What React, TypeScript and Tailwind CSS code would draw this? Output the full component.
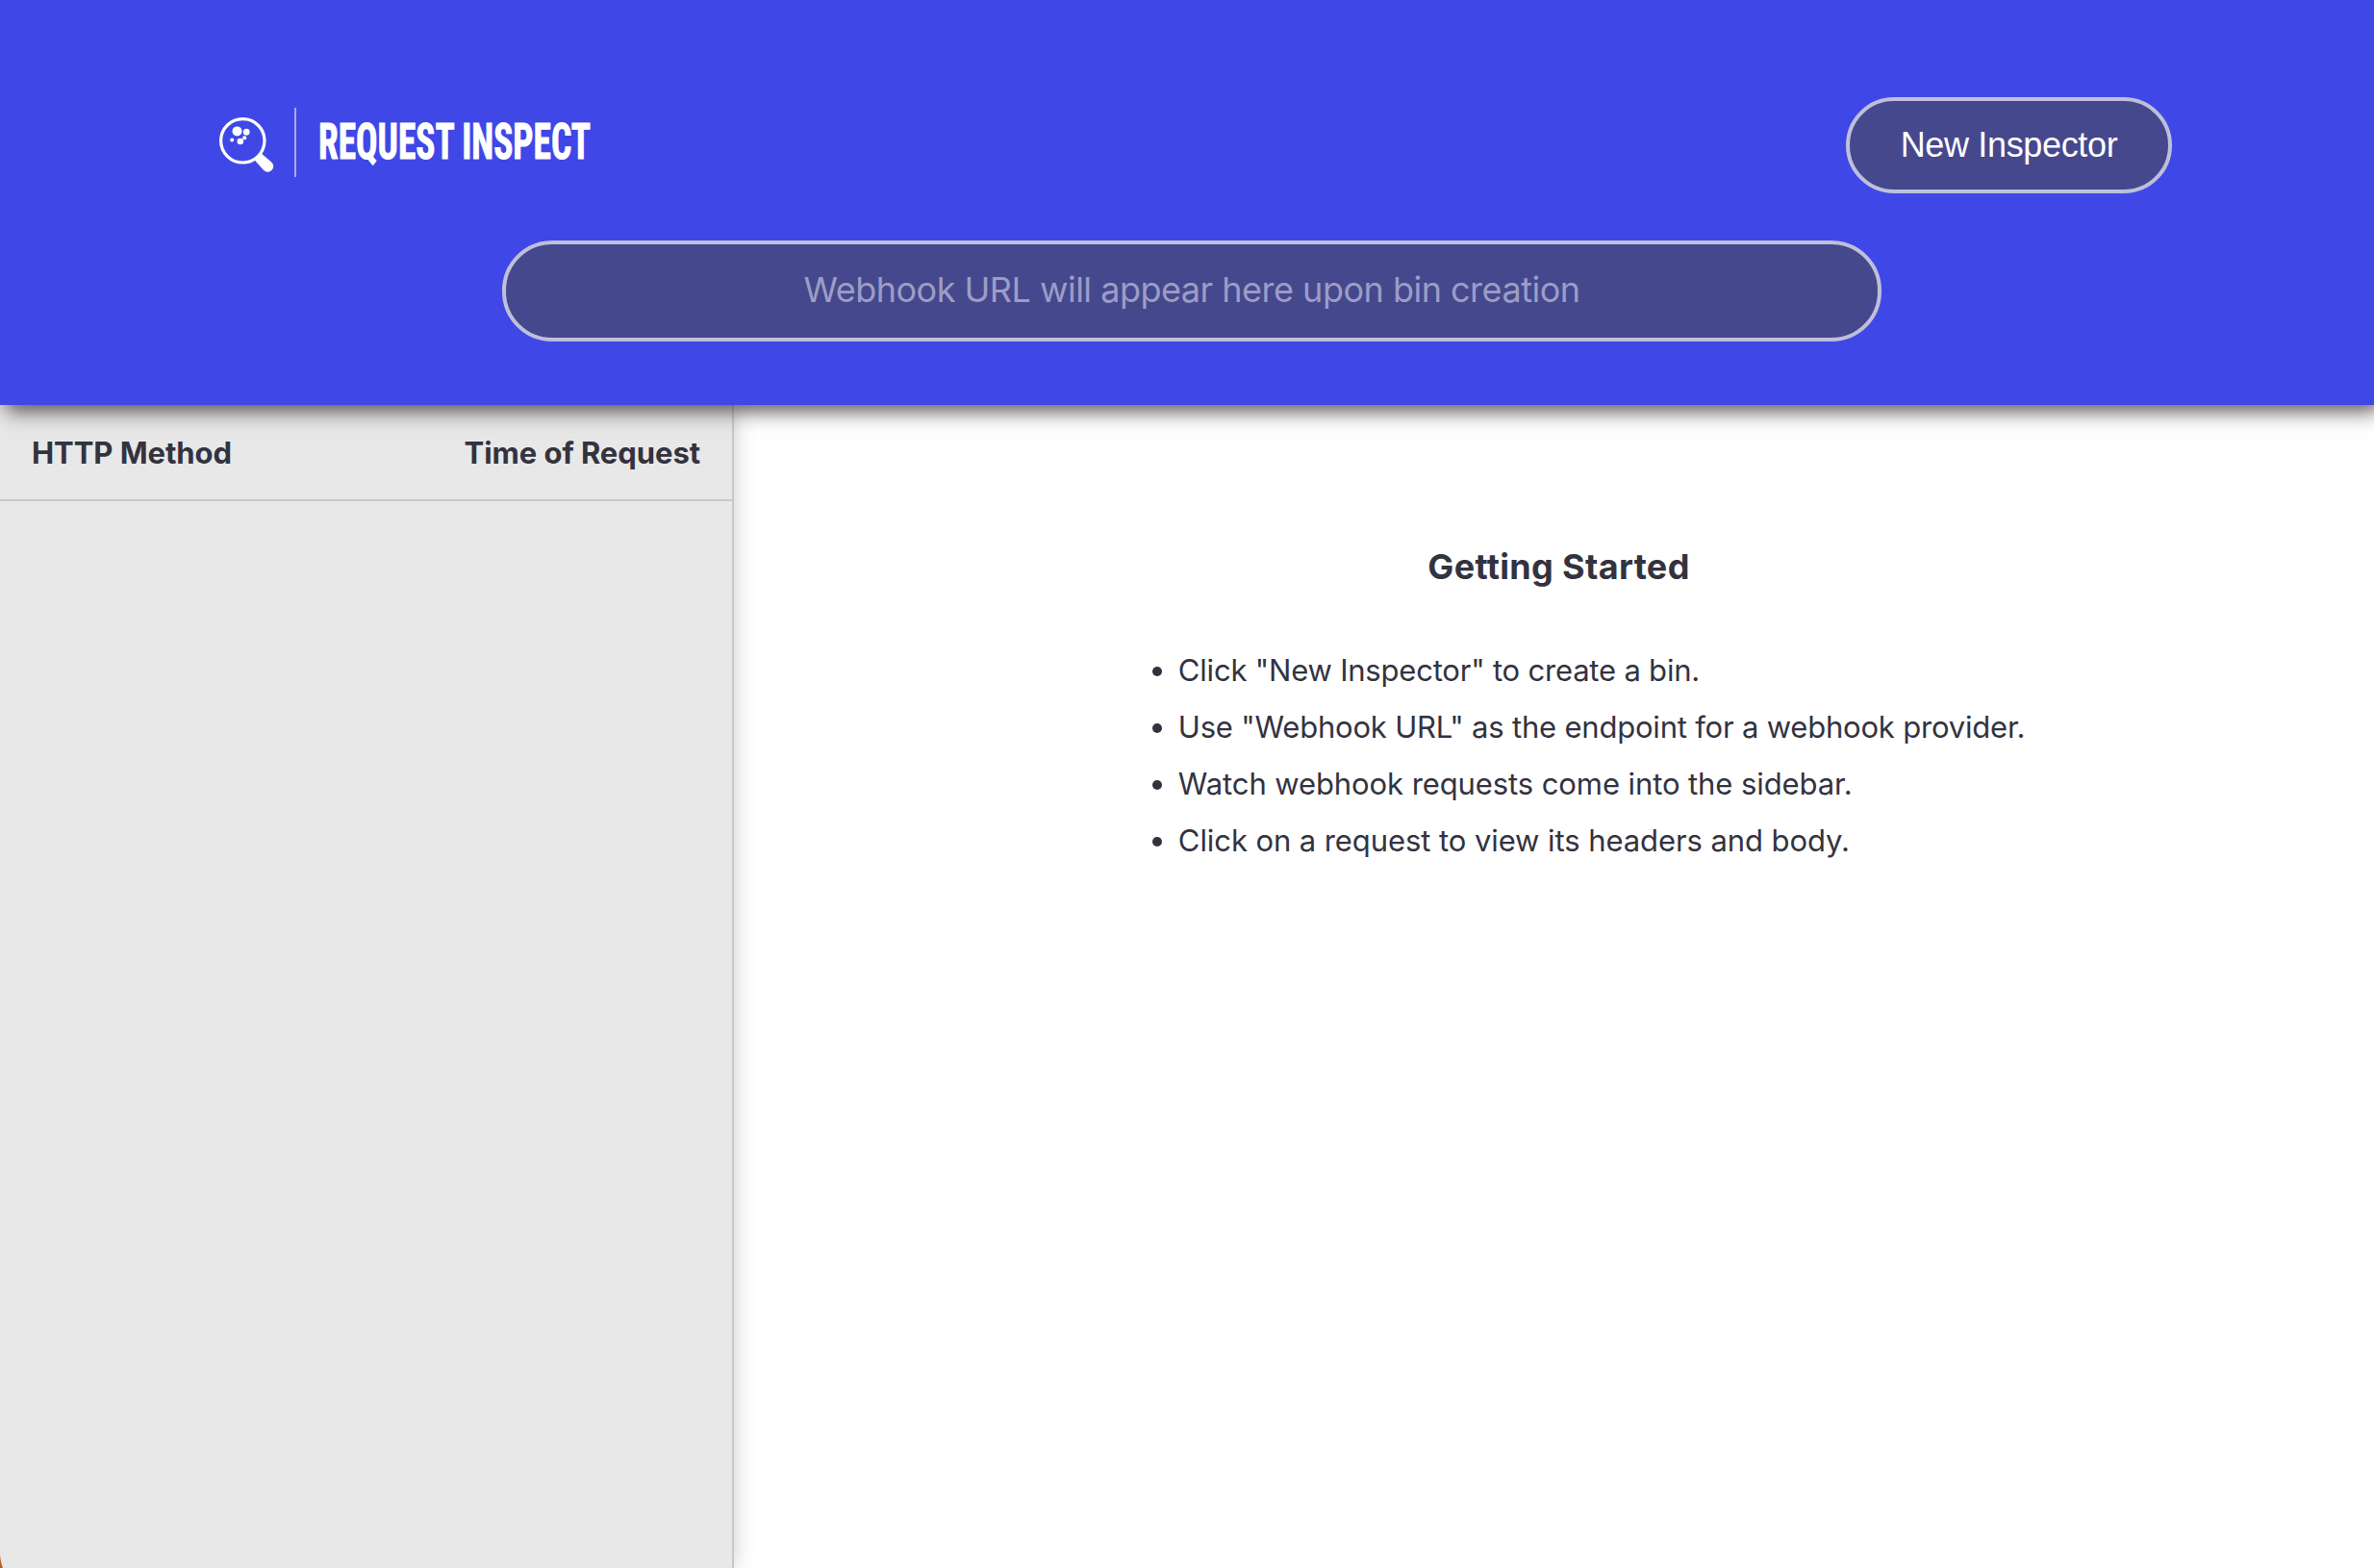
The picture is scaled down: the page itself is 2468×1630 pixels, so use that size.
const steps = [
  { text: 'Click "New Inspector" to create a bin.', spacing: 'tracking-[-0.2px]' },
  { text: 'Use "Webhook URL" as the endpoint for a webhook provider.', spacing: 'tracking-[-0.2px]' },
  { text: 'Watch webhook requests come into the sidebar.', spacing: 'tracking-[-0.09px]' },
  { text: 'Click on a request to view its headers and body.', spacing: 'tracking-[-0.08px]' },
];

function Logo() {
  return (
    <div className="flex items-center">
      <svg className="mt-[4px] h-[60px] w-[60px]" viewBox="0 0 60 60" fill="white">
        <circle cx="25.3" cy="26.3" r="22.7" fill="none" stroke="white" strokeWidth="3.2" />
        <circle cx="19.5" cy="16.4" r="5" />
        <circle cx="29.2" cy="17.2" r="3.4" />
        <circle cx="27.2" cy="23.3" r="2.1" />
        <circle cx="14.2" cy="25.4" r="2" />
        <circle cx="22.8" cy="27" r="3.3" />
        <path d="M43.5 38.5 L54.9 48.2 Q59.5 52.8 55.4 56.9 Q51 60.8 46.9 56.8 L37.5 46.2 Q41.8 43 43.5 38.5Z" />
      </svg>
      <div className="ml-[19px] h-[72px] w-[2px] bg-[#a5a8f2]" />
      <h1 className="ml-[23px] w-[300px] whitespace-nowrap">
        <svg className="block h-[72px] w-[300px] overflow-visible" viewBox="0 0 300 72" fill="white">
          <text x="0" y="53" textLength="283" lengthAdjust="spacingAndGlyphs" stroke="white" strokeWidth="0.9" className="font-['Roboto',sans-serif] text-[52.5px] font-bold [font-stretch:75%]">
            REQUEST INSPECT
          </text>
        </svg>
      </h1>
    </div>
  );
}

export default function App() {
  return (
    <div className="relative flex h-[1630px] w-[2468px] flex-col overflow-hidden bg-white font-['Inter',sans-serif] text-[#33333f]">
      <header className="relative z-10 flex h-[421px] shrink-0 flex-col items-center bg-[#3f48e7] pt-[101px] shadow-[6px_6px_20px_rgba(63,52,52,0.88)]">
        <div className="flex h-[100px] w-full justify-between pr-[210px] pl-[227px]">
          <div className="-mt-[6px] flex h-[106px] items-center">
            <Logo />
          </div>
          <button className="h-[100px] w-[339px] rounded-[50px] border-4 border-[#bfbfdb] bg-[#46488d] font-['Liberation_Sans',sans-serif] text-[36px] tracking-[-0.35px] text-white">
            New Inspector
          </button>
        </div>
        <div className="mt-[49px] ml-[10px] flex h-[105px] w-[1434px] items-center justify-center rounded-[52px] border-4 border-[#bfbfdb] bg-[#46488d] pb-[3px] text-[36px] tracking-[-0.5px] text-[#9c9dc6]">
          Webhook URL will appear here upon bin creation
        </div>
      </header>
      <div className="flex min-h-0 flex-1">
        <aside className="w-[763px] shrink-0 border-r-2 border-[#c8c8c8] bg-[#e8e8e8] shadow-[0_0_20px_rgba(63,52,52,0.26)]">
          <div className="flex h-[100px] items-center justify-between border-b-2 border-[#c8c8c8] px-[33px] pt-[2px] text-[31px] font-bold tracking-[-0.06px]">
            <span>HTTP Method</span>
            <span>Time of Request</span>
          </div>
        </aside>
        <main className="flex flex-1 flex-col items-center pl-[10px]">
          <h2 className="mt-[141px] text-[36px] leading-[54px] font-bold tracking-[0.35px]">Getting Started</h2>
          <ul className="mt-[51px] list-disc pl-[89px] text-[31px] leading-[59px]">
            {steps.map(({ text, spacing }) => (
              <li key={text} className={spacing}>{text}</li>
            ))}
          </ul>
        </main>
      </div>
      <svg className="absolute bottom-0 left-0 h-[14px] w-[4px]" viewBox="0 0 4 14">
        <path d="M0 0 Q0.8 9 3 14 H0Z" fill="#b5622a" />
      </svg>
    </div>
  );
}
